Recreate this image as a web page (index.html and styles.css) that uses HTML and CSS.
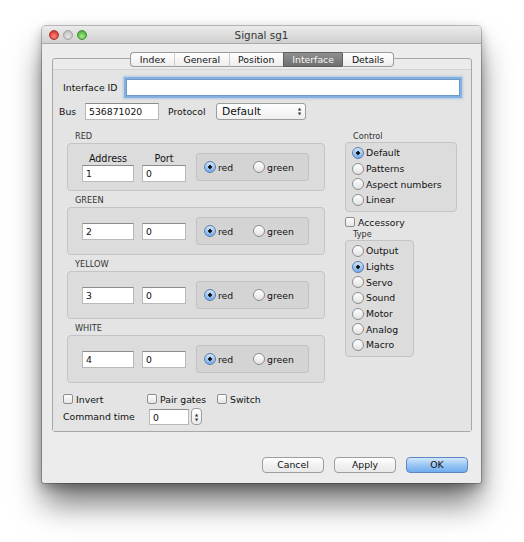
FILE: index.html
```html
<!DOCTYPE html>
<html lang="en">
<head>
    <meta charset="UTF-8">
    <title>Signal sg1</title>
    <link rel="stylesheet" href="styles.css">
</head>
<body>
    <div class="window">
        <div class="titlebar">
            <div class="lights">
                <span class="light close"></span>
                <span class="light minimize"></span>
                <span class="light zoom"></span>
            </div>
            <div class="title">Signal sg1</div>
            <div></div>
        </div>

        <div class="tabs">
            <span class="tab">Index</span>
            <span class="tab">General</span>
            <span class="tab">Position</span>
            <span class="tab selected">Interface</span>
            <span class="tab">Details</span>
        </div>

        <div class="tabbox">
            <div class="panel">
                <div class="row id-row">
                    <span class="label id-label">Interface ID</span>
                    <div class="field focus grow"></div>
                </div>

                <div class="row bus-row">
                    <span class="label bus-label">Bus</span>
                    <div class="field bus-field">536871020</div>
                    <span class="label protocol-label">Protocol</span>
                    <div class="popup">Default<span class="arrows">&#9650;<br>&#9660;</span></div>
                </div>

                <div class="columns">
                    <div class="left">
                        <div class="section">
                            <div class="caption">RED</div>
                            <div class="group">
                                <div class="col">
                                    <div class="head">Address</div>
                                    <div class="field addr">1</div>
                                </div>
                                <div class="col">
                                    <div class="head">Port</div>
                                    <div class="field port">0</div>
                                </div>
                                <div class="aspect">
                                    <span class="radio checked red-opt">red</span>
                                    <span class="radio">green</span>
                                </div>
                            </div>
                        </div>
                        <div class="section">
                            <div class="caption">GREEN</div>
                            <div class="group">
                                <div class="field addr">2</div>
                                <div class="field port">0</div>
                                <div class="aspect">
                                    <span class="radio checked red-opt">red</span>
                                    <span class="radio">green</span>
                                </div>
                            </div>
                        </div>
                        <div class="section">
                            <div class="caption">YELLOW</div>
                            <div class="group">
                                <div class="field addr">3</div>
                                <div class="field port">0</div>
                                <div class="aspect">
                                    <span class="radio checked red-opt">red</span>
                                    <span class="radio">green</span>
                                </div>
                            </div>
                        </div>
                        <div class="section">
                            <div class="caption">WHITE</div>
                            <div class="group">
                                <div class="field addr">4</div>
                                <div class="field port">0</div>
                                <div class="aspect">
                                    <span class="radio checked red-opt">red</span>
                                    <span class="radio">green</span>
                                </div>
                            </div>
                        </div>
                    </div>

                    <div class="right">
                        <div class="caption right-caption">Control</div>
                        <div class="box control-box">
                            <span class="radio checked">Default</span>
                            <span class="radio">Patterns</span>
                            <span class="radio">Aspect numbers</span>
                            <span class="radio">Linear</span>
                        </div>
                        <span class="check accessory">Accessory</span>
                        <div class="caption right-caption">Type</div>
                        <div class="box type-box">
                            <span class="radio">Output</span>
                            <span class="radio checked">Lights</span>
                            <span class="radio">Servo</span>
                            <span class="radio">Sound</span>
                            <span class="radio">Motor</span>
                            <span class="radio">Analog</span>
                            <span class="radio">Macro</span>
                        </div>
                    </div>
                </div>

                <div class="row checks-row">
                    <span class="check invert">Invert</span>
                    <span class="check pair">Pair gates</span>
                    <span class="check">Switch</span>
                </div>

                <div class="row cmd-row">
                    <span class="label cmd-label">Command time</span>
                    <div class="field cmd-field">0</div>
                    <div class="stepper"><span>&#9650;</span><span>&#9660;</span></div>
                </div>
            </div>
        </div>

        <div class="buttons">
            <div class="button">Cancel</div>
            <div class="button">Apply</div>
            <div class="button default">OK</div>
        </div>
    </div>
</body>
</html>
```

FILE: styles.css
```css
html {
    background: #fff;
}
body {
    margin: 0;
    min-height: 542px;
    padding-top: 26px;
    box-sizing: border-box;
    background: #fff;
    font-family: "DejaVu Sans", sans-serif;
    font-size: 9.3px;
    color: #111;
}
.window {
    margin-left: 42px;
    width: 439px;
    height: 457px;
    box-sizing: border-box;
    background: #ececec;
    border-radius: 4px 4px 2px 2px;
    box-shadow: 0 0 0 1px rgba(0,0,0,0.22), 0 4px 12px rgba(0,0,0,0.3), 0 22px 32px -2px rgba(0,0,0,0.55);
}
.titlebar {
    height: 17px;
    display: grid;
    grid-template-columns: 1fr auto 1fr;
    align-items: center;
    background: linear-gradient(#ebebeb, #d0d0d0);
    border-bottom: 1px solid #a9a9a9;
    border-radius: 4px 4px 0 0;
}
.lights {
    display: flex;
    gap: 4px;
    padding-left: 7px;
}
.light {
    width: 10px;
    height: 10px;
    border-radius: 50%;
    box-sizing: border-box;
}
.close {
    background: radial-gradient(circle at 50% 65%, #ff8a80, #d83b33 70%);
    border: 1px solid #a6322b;
}
.minimize {
    background: radial-gradient(circle at 50% 65%, #e6e6e6, #c2c2c2 70%);
    border: 1px solid #a2a2a2;
}
.zoom {
    background: radial-gradient(circle at 50% 65%, #a9ec8f, #4fb63b 70%);
    border: 1px solid #3f8e2f;
}
.title {
    font-size: 10.4px;
    color: #333;
}

/* tabs */
.tabs {
    position: relative;
    z-index: 1;
    display: flex;
    justify-content: center;
    margin-top: 8px;
    padding-left: 1px;
}
.tab {
    height: 13px;
    line-height: 13px;
    padding: 0 8.5px;
    border: 1px solid #9b9b9b;
    border-left-color: #cacaca;
    border-right: none;
    background: linear-gradient(#ffffff, #ededed);
}
.tab:first-child {
    border-left-color: #9b9b9b;
    border-radius: 4px 0 0 4px;
}
.tab:last-child {
    border-right: 1px solid #9b9b9b;
    border-radius: 0 4px 4px 0;
}
.tab.selected {
    background: linear-gradient(#8f8f8f, #6f6f6f);
    border-color: #5f5f5f;
    color: #f4f4f4;
}
.tab.selected + .tab {
    border-left-color: #5f5f5f;
}
.tabbox {
    margin: -9px 9px 0 10px;
    height: 374px;
    box-sizing: border-box;
    border: 1px solid #a7a7a7;
    border-radius: 3px;
    background: #ebebeb;
    padding-top: 10px;
}
.panel {
    height: 100%;
    box-sizing: border-box;
    border-top: 1px solid #d3d3d3;
    background: #e4e4e4;
    padding: 0 11px 0 10px;
}

/* rows and fields */
.row {
    display: flex;
    align-items: center;
}
.field {
    height: 15px;
    line-height: 15px;
    padding: 0 3px;
    border: 1px solid #b9b9b9;
    border-top-color: #8c8c8c;
    background: #fff;
    box-sizing: content-box;
}
.grow {
    flex: 1;
}
.focus {
    border-color: #6d98c8;
    box-shadow: 0 0 0 2px #82b1e2, 0 0 2px 3px rgba(130,177,226,0.5);
}
.id-row {
    height: 19px;
    margin-top: 8px;
}
.id-label {
    width: 63px;
}
.bus-row {
    height: 17px;
    margin-top: 6px;
    margin-left: -4px;
}
.bus-label {
    width: 26px;
}
.bus-field {
    width: 66px;
}
.protocol-label {
    width: 48px;
    margin-left: 9px;
}
.popup {
    position: relative;
    width: 83px;
    height: 15px;
    line-height: 15px;
    padding-left: 5px;
    border: 1px solid #9c9c9c;
    border-radius: 3px;
    background: linear-gradient(#ffffff, #efefef);
    font-size: 10.7px;
}
.arrows {
    position: absolute;
    right: 4px;
    top: 3px;
    font-size: 4px;
    line-height: 4.5px;
    color: #333;
}

/* signal groups */
.columns {
    display: flex;
    margin-top: 10px;
}
.left {
    width: 258px;
    margin-left: 4px;
}
.caption {
    height: 13px;
    line-height: 13px;
    padding-left: 8px;
    font-size: 8.2px;
    color: #333;
}
.section {
    margin-bottom: 3px;
}
.group {
    display: flex;
    align-items: center;
    gap: 8px;
    height: 48px;
    box-sizing: border-box;
    padding-left: 14px;
    border: 1px solid #c4c4c4;
    border-radius: 4px;
    background: #dcdcdc;
}
.col {
    display: flex;
    flex-direction: column;
}
.head {
    height: 12px;
    line-height: 12px;
    text-align: center;
    font-size: 9.6px;
}
.addr {
    width: 44px;
}
.port {
    width: 36px;
}
.aspect {
    display: flex;
    align-items: center;
    width: 113px;
    height: 28px;
    box-sizing: border-box;
    margin-left: 2px;
    padding-left: 7px;
    border: 1px solid #c2c2c2;
    border-radius: 3px;
    background: #d4d4d4;
}
.red-opt {
    width: 49px;
}

/* radios and checkboxes */
.radio, .check {
    display: flex;
    align-items: center;
    gap: 2px;
}
.radio::before {
    content: "";
    width: 12px;
    height: 12px;
    box-sizing: border-box;
    border-radius: 50%;
    border: 1px solid #8e8e8e;
    background: linear-gradient(#ffffff, #e2e2e2);
}
.radio.checked::before {
    border-color: #5a7fae;
    background: radial-gradient(circle, #111 0 1.5px, transparent 2.1px), linear-gradient(#cfe3f8, #76acea);
}
.check {
    gap: 3px;
}
.check::before {
    content: "";
    width: 10px;
    height: 10px;
    box-sizing: border-box;
    border: 1px solid #8e8e8e;
    border-radius: 2px;
    background: linear-gradient(#ffffff, #e4e4e4);
}

/* right column */
.right {
    width: 112px;
    margin-left: 20px;
    display: flex;
    flex-direction: column;
    align-items: flex-start;
}
.right-caption {
    height: 12px;
    line-height: 12px;
}
.box {
    display: flex;
    flex-direction: column;
    box-sizing: border-box;
    padding: 2px 0 0 6px;
    border: 1px solid #c4c4c4;
    border-radius: 4px;
    background: #dcdcdc;
}
.box .radio {
    height: 15.7px;
}
.control-box {
    width: 112px;
    height: 70px;
}
.type-box {
    width: 69px;
    height: 117px;
}
.accessory {
    height: 12px;
    margin-top: 4px;
}

/* bottom rows */
.checks-row {
    height: 12px;
    margin-top: 7px;
}
.invert {
    width: 84px;
}
.pair {
    width: 70px;
}
.cmd-row {
    height: 17px;
    margin-top: 3px;
}
.cmd-label {
    width: 86px;
}
.cmd-field {
    width: 32px;
    height: 14px;
}
.stepper {
    display: flex;
    flex-direction: column;
    justify-content: center;
    margin-left: 2px;
    width: 9px;
    height: 15px;
    border: 1px solid #9c9c9c;
    border-radius: 4px;
    background: linear-gradient(#ffffff, #ececec);
    font-size: 4px;
    line-height: 5px;
    text-align: center;
    color: #333;
}

/* buttons */
.buttons {
    display: flex;
    justify-content: flex-end;
    gap: 10px;
    margin-top: 25px;
    padding-right: 13px;
}
.button {
    width: 62px;
    height: 16px;
    box-sizing: border-box;
    line-height: 14px;
    text-align: center;
    border: 1px solid #9d9d9d;
    border-radius: 4px;
    background: linear-gradient(#ffffff, #f2f2f2 50%, #e8e8e8);
}
.button.default {
    border-color: #5d87c0;
    background: linear-gradient(#d3e7fb, #9ac6f4 50%, #70acee);
}
```
